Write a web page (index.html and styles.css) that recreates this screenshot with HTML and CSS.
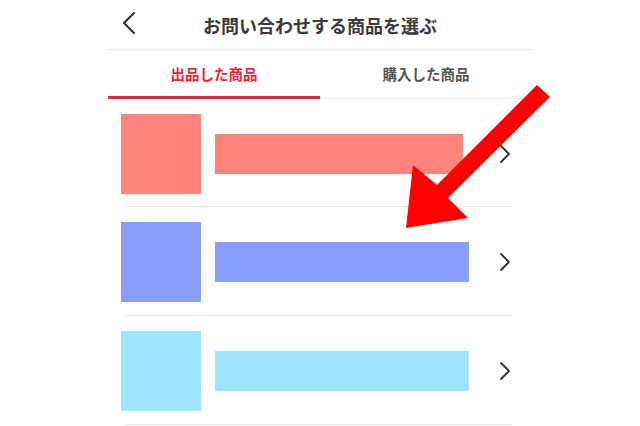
FILE: index.html
```html
<!DOCTYPE html>
<html lang="ja">
<head>
    <meta charset="UTF-8">
    <meta name="viewport" content="width=device-width, initial-scale=1.0">
    <title>お問い合わせする商品を選ぶ</title>
    <link rel="stylesheet" href="styles.css">
</head>
<body>
    <div class="screen">
        <div class="header">
            <svg class="back" width="16" height="24" viewBox="0 0 16 24">
                <path d="M13 2 L3 12 L13 22" fill="none" stroke="#333" stroke-width="2.2" stroke-linecap="round" stroke-linejoin="round"/>
            </svg>
            <h1>お問い合わせする商品を選ぶ</h1>
        </div>
        <div class="tabs">
            <div class="tab active">出品した商品</div>
            <div class="tab">購入した商品</div>
        </div>
        <div class="list">
            <div class="item">
                <div class="row first">
                    <div class="thumb pink"></div>
                    <div class="bar pink short"></div>
                    <svg class="chevron" width="12" height="20" viewBox="0 0 12 20"><path d="M2 2 L10 10 L2 18" fill="none" stroke="#333" stroke-width="1.8" stroke-linecap="round" stroke-linejoin="round"/></svg>
                </div>
                <div class="sep"></div>
            </div>
            <div class="item">
                <div class="row">
                    <div class="thumb blue"></div>
                    <div class="bar blue"></div>
                    <svg class="chevron" width="12" height="20" viewBox="0 0 12 20"><path d="M2 2 L10 10 L2 18" fill="none" stroke="#333" stroke-width="1.8" stroke-linecap="round" stroke-linejoin="round"/></svg>
                </div>
                <div class="sep"></div>
            </div>
            <div class="item">
                <div class="row">
                    <div class="thumb cyan"></div>
                    <div class="bar cyan"></div>
                    <svg class="chevron" width="12" height="20" viewBox="0 0 12 20"><path d="M2 2 L10 10 L2 18" fill="none" stroke="#333" stroke-width="1.8" stroke-linecap="round" stroke-linejoin="round"/></svg>
                </div>
                <div class="sep"></div>
            </div>
        </div>
    </div>

    <!-- annotation arrow drawn over the screenshot -->
    <svg class="arrow" width="640" height="426" viewBox="0 0 640 426">
        <polygon points="537,85 550,97 448,198 468,218 406,228 413,165 437,185" fill="#fe0000"/>
    </svg>
</body>
</html>
```

FILE: styles.css
```css
body {
    margin: 0;
    background: #fff;
    font-family: "Noto Sans CJK JP", "Noto Sans", sans-serif;
    color: #333;
    overflow: hidden;
}
.screen {
    width: 424px;
    margin: 0 auto;
}
.header {
    height: 49px;
    display: flex;
    align-items: center;
    justify-content: center;
    border-bottom: 1px solid #ececec;
    position: relative;
}
.header h1 {
    margin: 0;
    font-size: 18px;
    font-weight: 700;
    color: #3a3a3a;
}
.back {
    position: absolute;
    left: 13px;
    top: 11px;
}
.tabs {
    display: flex;
    border-bottom: 1px solid #ececec;
}
.tab {
    flex: 1;
    height: 46px;
    display: flex;
    align-items: center;
    justify-content: center;
    font-size: 14.5px;
    font-weight: 700;
    color: #555;
    border-bottom: 3px solid transparent;
    margin-bottom: -1px;
}
.tab.active {
    color: #f0233b;
    border-bottom-color: #f0233b;
}
.row {
    display: flex;
    align-items: center;
    padding: 15px 0 13px 13px;
}
.row.first {
    padding-top: 15px;
    padding-bottom: 12px;
}
.thumb {
    width: 80px;
    height: 80px;
}
.bar {
    width: 254px;
    height: 40px;
    margin-left: 14px;
}
.bar.short {
    width: 248px;
}
.chevron {
    margin-left: 30px;
}
.row .bar.short + .chevron {
    margin-left: 36px;
}
.sep {
    height: 1px;
    background: #e8e8e8;
    margin: 0 19px 0 18px;
}
.pink { background: #ff847c; }
.blue { background: #889ffe; }
.cyan { background: #9fe4fd; }
.arrow {
    position: absolute;
    left: 0;
    top: 0;
}
```
